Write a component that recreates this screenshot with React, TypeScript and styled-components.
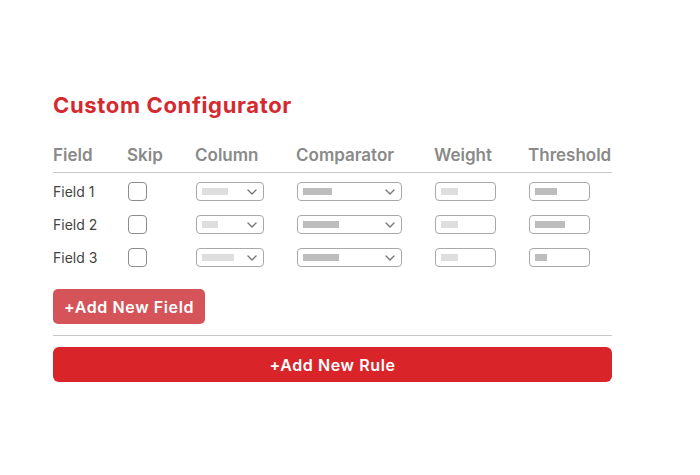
import styled, { createGlobalStyle } from 'styled-components';

const GlobalStyle = createGlobalStyle`
  body {
    margin: 0;
    background: #fff;
    font-family: Inter, "Noto Sans", sans-serif;
  }
`;

const Page = styled.div`
  width: 700px;
  height: 475px;
  box-sizing: border-box;
  padding: 90px 88px 0 53px;
`;

const Title = styled.h1`
  margin: 0;
  font-size: 22px;
  line-height: 30px;
  font-weight: 700;
  color: #d42a2f;
  letter-spacing: 0.65px;
`;

const Table = styled.div`
  margin-top: 20px;
`;

const GRID = '74px 68px 101px 138px 94px 1fr';

const HeaderRow = styled.div`
  display: grid;
  grid-template-columns: ${GRID};
  height: 32px;
  border-bottom: 1px solid #c8c8c8;
`;

const HeaderCell = styled.div`
  font-size: 17px;
  line-height: 30px;
  font-weight: 600;
  color: #8a8a8a;
  white-space: nowrap;
`;

const Body = styled.div`
  padding-top: 2px;
`;

const Row = styled.div`
  display: grid;
  grid-template-columns: ${GRID};
  height: 33px;
  align-items: center;
`;

const FieldName = styled.div`
  font-size: 14px;
  color: #444;
`;

const Checkbox = styled.div`
  width: 19px;
  height: 19px;
  box-sizing: border-box;
  border: 1px solid #8c8c8c;
  border-radius: 4px;
  margin-left: 1px;
`;

const Box = styled.div<{ $w: number }>`
  width: ${(p) => p.$w}px;
  height: 19px;
  box-sizing: border-box;
  border: 1px solid #a8a8a8;
  border-radius: 4px;
  display: flex;
  align-items: center;
  justify-content: space-between;
  padding: 0 6px 0 5px;
  margin-left: 1px;
`;

const Placeholder = styled.span<{ $dark?: boolean }>`
  display: block;
  height: 7px;
  background: ${(p) => (p.$dark ? '#bdbdbd' : '#dedede')};
`;

const Chevron = () => (
  <svg width="10" height="6" viewBox="0 0 10 6">
    <path d="M1 1l4 4 4-4" fill="none" stroke="#777" strokeWidth="1.4" strokeLinecap="round" strokeLinejoin="round" />
  </svg>
);

const FieldButton = styled.button`
  margin-top: 15px;
  height: 35px;
  width: 152px;
  border: none;
  border-radius: 5px;
  background: #d4545a;
  color: #fff;
  font-family: inherit;
  font-size: 16px;
  font-weight: 600;
  letter-spacing: 0.6px;
  display: block;
  padding: 0;
`;

const Divider = styled.div`
  margin-top: 11px;
  height: 1px;
  background: #c8c8c8;
`;

const RuleButton = styled.button`
  margin-top: 11px;
  height: 35px;
  width: 100%;
  border: none;
  border-radius: 6px;
  background: #d9242a;
  color: #fff;
  font-family: inherit;
  font-size: 16px;
  font-weight: 600;
  letter-spacing: 0.6px;
  display: block;
  padding: 0;
`;

const headers = ['Field', 'Skip', 'Column', 'Comparator', 'Weight', 'Threshold'];

const rows = [
  { name: 'Field 1', col: 26, comp: 29, weight: 17, thr: 22 },
  { name: 'Field 2', col: 16, comp: 36, weight: 17, thr: 30 },
  { name: 'Field 3', col: 32, comp: 36, weight: 17, thr: 12 },
];

export default function App() {
  return (
    <>
      <GlobalStyle />
      <Page>
        <Title>Custom Configurator</Title>
        <Table>
          <HeaderRow>
            {headers.map((h) => (
              <HeaderCell key={h}>{h}</HeaderCell>
            ))}
          </HeaderRow>
          <Body>
            {rows.map((r) => (
              <Row key={r.name}>
                <FieldName>{r.name}</FieldName>
                <Checkbox />
                <Box $w={68}>
                  <Placeholder style={{ width: r.col }} />
                  <Chevron />
                </Box>
                <Box $w={105}>
                  <Placeholder $dark style={{ width: r.comp }} />
                  <Chevron />
                </Box>
                <Box $w={61}>
                  <Placeholder style={{ width: r.weight }} />
                </Box>
                <Box $w={61}>
                  <Placeholder $dark style={{ width: r.thr }} />
                </Box>
              </Row>
            ))}
          </Body>
        </Table>
        <FieldButton>+Add New Field</FieldButton>
        <Divider />
        <RuleButton>+Add New Rule</RuleButton>
      </Page>
    </>
  );
}
